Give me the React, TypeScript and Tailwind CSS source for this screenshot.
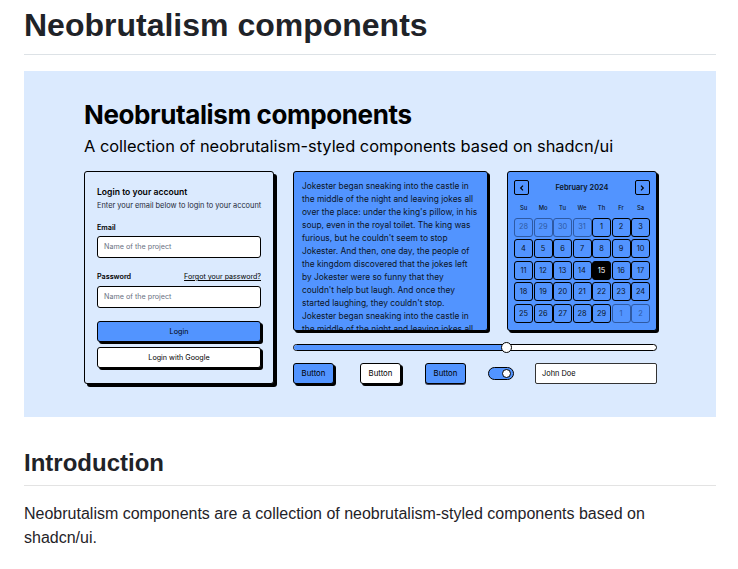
import React from "react";

const line1 = "Jokester began sneaking into the castle in";
const storyLines = [
  line1,
  "the middle of the night and leaving jokes all",
  "over the place: under the king's pillow, in his",
  "soup, even in the royal toilet. The king was",
  "furious, but he couldn't seem to stop",
  "Jokester. And then, one day, the people of",
  "the kingdom discovered that the jokes left",
  "by Jokester were so funny that they",
  "couldn't help but laugh. And once they",
  "started laughing, they couldn't stop.",
  line1,
  "the middle of the night and leaving jokes all",
];

const days = ["Su", "Mo", "Tu", "We", "Th", "Fr", "Sa"];
const dates = [
  28, 29, 30, 31, 1, 2, 3, 4, 5, 6, 7, 8, 9, 10, 11, 12, 13, 14, 15, 16, 17, 18,
  19, 20, 21, 22, 23, 24, 25, 26, 27, 28, 29, 1, 2,
];

function Field() {
  return (
    <div className="h-[22px] bg-white border border-black rounded-[3px] flex items-center pl-[6px] text-[7.2px] text-gray-500">
      Name of the project
    </div>
  );
}

function LoginCard() {
  return (
    <div className="w-[190px] h-[213px] bg-[#dbeafe] border border-black rounded-[3px] shadow-[3px_3px_0_0_#000] px-[12px] pt-[14px] text-black">
      <div className="text-[8.6px] leading-[12px] font-semibold">
        Login to your account
      </div>
      <div className="text-[7.4px] leading-[10px] mt-[3px] text-gray-800 whitespace-nowrap">
        Enter your email below to login to your account
      </div>
      <div className="text-[7.2px] leading-[10px] font-semibold mt-[12px] mb-[3px]">
        Email
      </div>
      <Field />
      <div className="flex justify-between items-center text-[7.2px] leading-[10px] mt-[14px] mb-[4px]">
        <span className="font-semibold">Password</span>
        <span className="underline text-[7.1px]">Forgot your password?</span>
      </div>
      <Field />
      <div className="h-[21px] mt-[13px] bg-[#5294ff] border border-black rounded-[3px] shadow-[2px_2px_0_0_#000] flex items-center justify-center pt-[1px] text-[7.2px]">
        Login
      </div>
      <div className="h-[21px] mt-[5px] bg-white border border-black rounded-[3px] shadow-[2px_2px_0_0_#000] flex items-center justify-center pt-[1px] text-[7.2px]">
        Login with Google
      </div>
    </div>
  );
}

function Story() {
  return (
    <div className="w-[195px] h-[160px] bg-[#5294ff] border border-black rounded-[3px] shadow-[2px_2px_0_0_#000] overflow-hidden pl-[8px] pt-[8px] text-[8.4px] leading-[13px] text-[#0c1526]">
      {storyLines.map((l, i) => (
        <div key={i} className="whitespace-nowrap">
          {l}
        </div>
      ))}
    </div>
  );
}

function Calendar() {
  return (
    <div className="w-[150px] h-[160px] bg-[#5294ff] border border-black rounded-[3px] shadow-[2px_2px_0_0_#000] pl-[6px] pr-[6px] pt-[8px] text-[#0c1526]">
      <div className="flex items-center justify-between">
        <div className="w-[15px] h-[15px] border border-black rounded-[2px] flex items-center justify-center">
          <svg width="8" height="8" viewBox="0 0 24 24" fill="none" stroke="#000" strokeWidth="3.5">
            <path d="M15 5l-7 7 7 7" />
          </svg>
        </div>
        <div className="text-[7.4px] font-semibold">February 2024</div>
        <div className="w-[15px] h-[15px] border border-black rounded-[2px] flex items-center justify-center">
          <svg width="8" height="8" viewBox="0 0 24 24" fill="none" stroke="#000" strokeWidth="3.5">
            <path d="M9 5l7 7-7 7" />
          </svg>
        </div>
      </div>
      <div className="grid grid-cols-7 gap-x-[0.4px] mt-[8px] mb-[4.5px]">
        {days.map((d) => (
          <div key={d} className="text-center text-[5.8px] leading-[10px] font-medium">
            {d}
          </div>
        ))}
      </div>
      <div className="grid grid-cols-7 gap-x-[0.5px] gap-y-[2.6px]">
        {dates.map((d, i) => {
          const muted = i < 4 || i > 32;
          const today = i === 18;
          return (
            <div
              key={i}
              className={
                "h-[19px] rounded-[3px] border flex items-center justify-center text-[7.4px] " +
                (today
                  ? "bg-black border-black text-white"
                  : muted
                    ? "border-[#2f5aa3] text-[#2f5aa3]"
                    : "border-black")
              }
            >
              {d}
            </div>
          );
        })}
      </div>
    </div>
  );
}

function Slider() {
  return (
    <div className="relative h-[7px] mt-[13px] bg-white border border-black rounded-full">
      <div className="h-full w-[213px] bg-[#5294ff] rounded-l-full"></div>
      <div className="absolute left-[207px] top-[-3.5px] w-[11px] h-[11px] bg-white border border-black rounded-full"></div>
    </div>
  );
}

function MiniButton({ white, flat }: { white?: boolean; flat?: boolean }) {
  return (
    <div
      className={
        "w-[41px] h-[21px] border border-black rounded-[3px] flex items-center justify-center pt-[1px] text-[7.8px] " +
        (white ? "bg-white " : "bg-[#5294ff] ") +
        (flat ? "shadow-[0_1px_0_0_#445]" : "shadow-[2px_2px_0_0_#000]")
      }
    >
      Button
    </div>
  );
}

function Hero() {
  return (
    <div className="h-[346px] mt-[16px] bg-[#dbeafe] pl-[60px] pr-[59px] pt-[27px] text-black font-['Inter',sans-serif]">
      <div className="text-[26px] leading-[34px] font-bold tracking-[-0.4px] whitespace-nowrap">
        Neobrutalism components
      </div>
      <div className="text-[16.4px] leading-[24px] mt-[2px] whitespace-nowrap">
        A collection of neobrutalism-styled components based on shadcn/ui
      </div>
      <div className="flex gap-[19px] mt-[13px]">
        <LoginCard />
        <div className="w-[364px]">
          <div className="flex gap-[19px]">
            <Story />
            <Calendar />
          </div>
          <Slider />
          <div className="flex items-center mt-[12px]">
            <MiniButton />
            <div className="ml-[26px]">
              <MiniButton white />
            </div>
            <div className="ml-[24px]">
              <MiniButton flat />
            </div>
            <div className="ml-[22px] w-[26px] h-[13px] bg-[#5294ff] border border-black rounded-full flex items-center justify-end pr-[2px]">
              <div className="w-[9px] h-[9px] bg-white border border-black rounded-full"></div>
            </div>
            <div className="ml-[21px] w-[122px] h-[21px] bg-white border border-[#333] rounded-[2px] flex items-center pl-[6px] pt-[1px] text-[7.4px]">
              John Doe
            </div>
          </div>
        </div>
      </div>
    </div>
  );
}

export default function App() {
  return (
    <main className="min-h-screen bg-white px-[22px] ml-[2px] mr-0 text-[#1f2328] font-['Liberation_Sans',sans-serif]">
      <div className="w-[692px]">
        <h1 className="text-[32px] leading-[40px] font-bold pt-[5px] pb-[9px] border-b border-[#dde2e6]">
          Neobrutalism components
        </h1>
        <Hero />
        <h2 className="text-[24px] leading-[30px] font-bold mt-[31px] pb-[7px] border-b border-[#e3e3e3]">
          Introduction
        </h2>
        <p className="text-[16px] leading-[24px] mt-[16px]">
          Neobrutalism components are a collection of neobrutalism-styled
          components based on shadcn/ui.
        </p>
      </div>
    </main>
  );
}
